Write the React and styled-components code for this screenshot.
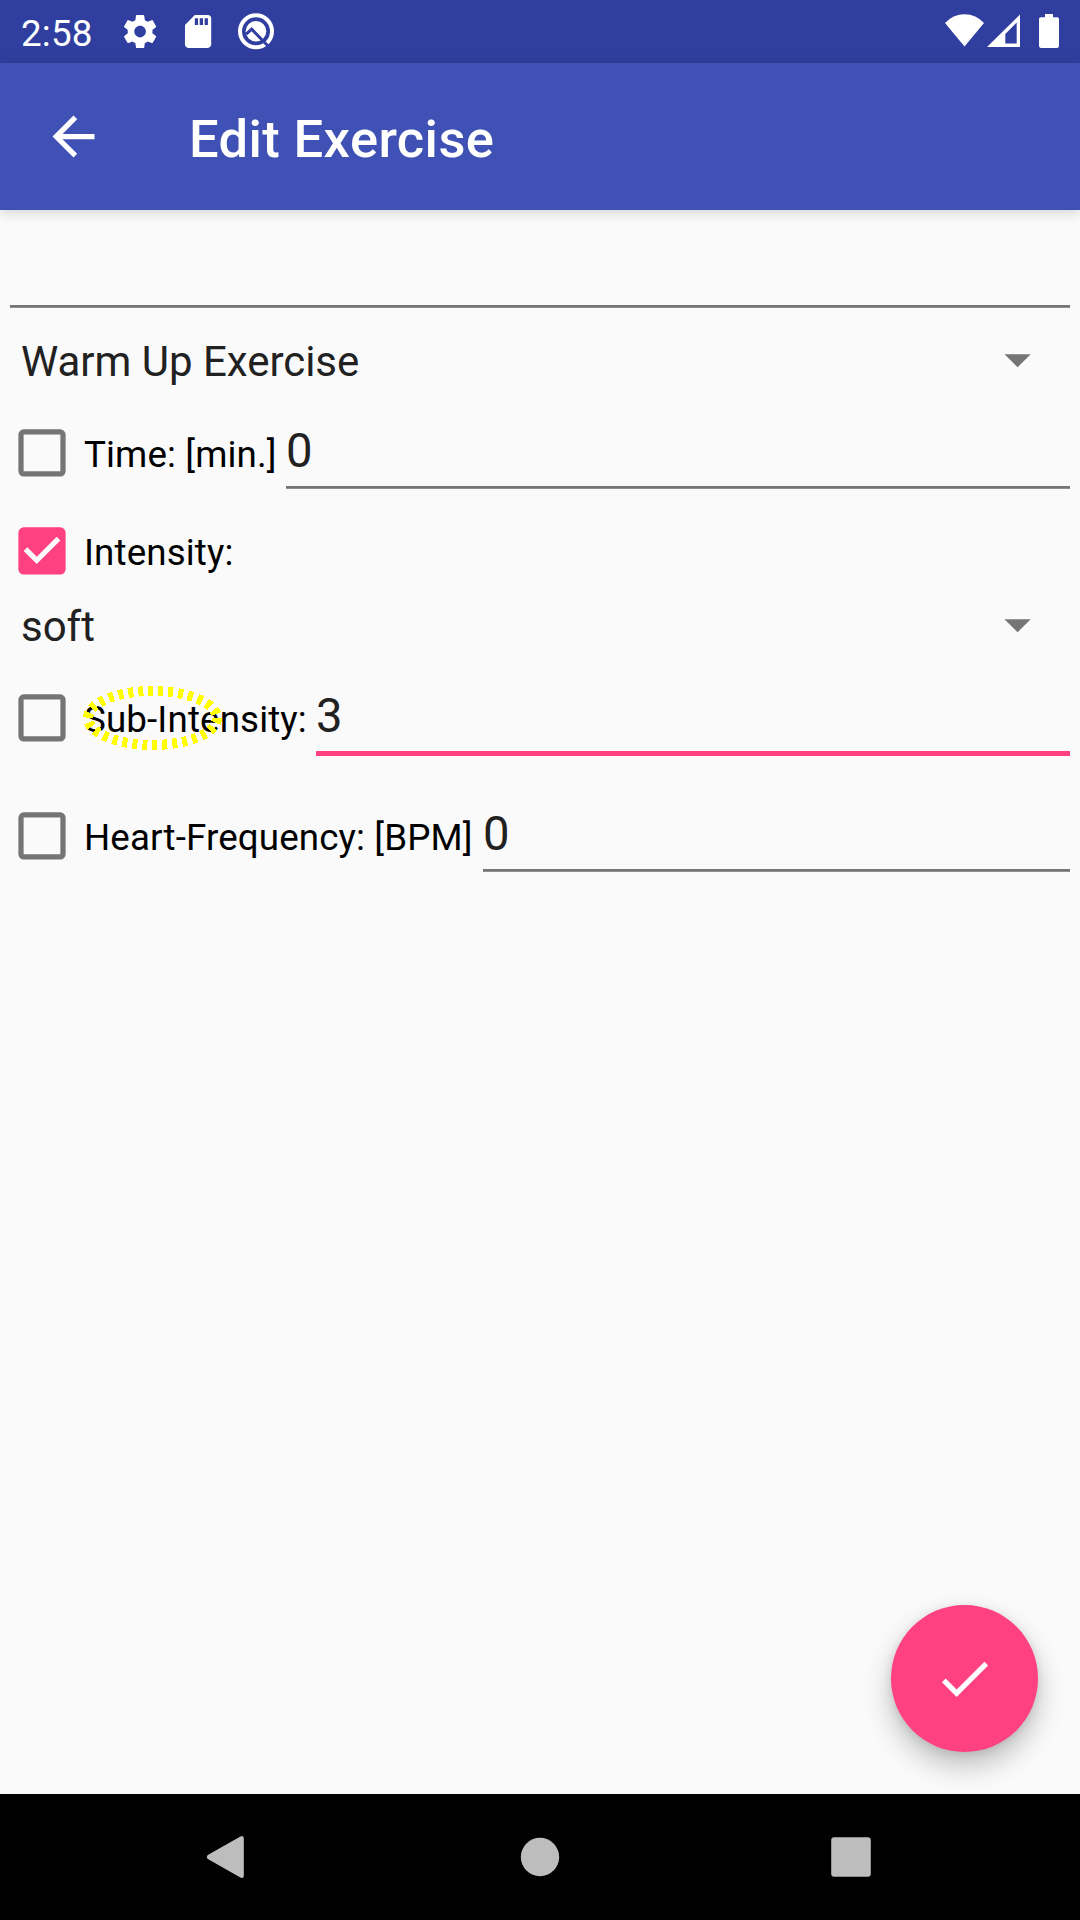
import React from "react";
import styled, { createGlobalStyle } from "styled-components";

const GlobalStyle = createGlobalStyle`
  * { box-sizing: border-box; }
  body { margin: 0; background: #fafafa; }
`;

const Screen = styled.div`
  width: 1080px;
  height: 1920px;
  display: flex;
  flex-direction: column;
  overflow: hidden;
  background: #fafafa;
  font-family: Roboto, "Noto Sans", sans-serif;
`;

const StatusBar = styled.header`
  height: 63px;
  flex: none;
  display: flex;
  align-items: flex-start;
  justify-content: space-between;
  background: #303f9f;
  color: #fff;
`;

const StatusGroup = styled.div`
  display: flex;
  height: 63px;
`;

const Clock = styled.span`
  width: 102px;
  padding-left: 21px;
  font-size: 36.75px;
  line-height: 67px;
  letter-spacing: 0.2px;
`;

const AppBar = styled.div`
  height: 147px;
  flex: none;
  display: flex;
  align-items: center;
  padding-left: 42px;
  background: #3f51b5;
  color: #fff;
  box-shadow: 0 2px 12px rgba(0, 0, 0, 0.17);
  z-index: 1;
`;

const IconButton = styled.button`
  display: flex;
  padding: 0;
  border: 0;
  background: none;
  color: inherit;
`;

const Title = styled.h1`
  margin: 5px 0 0 84px;
  font-size: 52.5px;
  line-height: 62px;
  font-weight: 500;
  letter-spacing: 0.38px;
  white-space: nowrap;
`;

const Form = styled.main`
  flex: 1;
  display: flex;
  flex-direction: column;
`;

const TextInput = styled.input`
  flex: 1;
  min-width: 0;
  height: ${(p) => p.$height || (p.$focused ? 89 : 87)}px;
  margin: 0 10px 0 0;
  padding: ${(p) => (p.$height ? 0 : p.$focused ? 8 : 10)}px 0 0;
  border: 0;
  border-radius: 0;
  outline: 0;
  background: linear-gradient(
      ${(p) => (p.$focused ? "#ff4081, #ff4081" : "#757575 2px, #8f8f8f 2px")}
    )
    left bottom / 100% ${(p) => (p.$focused ? 5 : 3)}px no-repeat;
  color: #212121;
  font: 47.25px/56px Roboto, "Noto Sans", sans-serif;
`;

const NameField = styled.div`
  height: 108px;
  display: flex;
  padding-left: 10px;
`;

const Spinner = styled.div`
  height: 84px;
  flex: none;
  display: flex;
  align-items: center;
  justify-content: space-between;
  padding: 3px 49px 0 21px;
  color: #212121;
  font-size: 42px;
  line-height: 50px;
  letter-spacing: -0.03px;
`;

const CaretSvg = styled.svg`
  width: 27px;
  height: 15px;
  margin-bottom: 2px;
`;

const Row = styled.div`
  height: ${(p) => p.$height || 102}px;
  margin-bottom: ${(p) => p.$gap || 0}px;
  flex: none;
  display: flex;
  align-items: flex-start;
`;

const CheckLabel = styled.label`
  height: 100%;
  width: ${(p) => p.$width}px;
  flex: none;
  display: flex;
  align-items: center;
  color: #000;
  font-size: 36.75px;
  line-height: 43px;
  letter-spacing: 0.12px;
  white-space: nowrap;
`;

const LabelText = styled.span`
  position: relative;
  padding-top: 3px;
`;

const BoxSvg = styled.svg`
  width: 63px;
  height: 63px;
  margin: 0 11px 1px 10px;
  flex: none;
`;

const Highlight = styled.svg`
  position: absolute;
  left: -2px;
  top: -11px;
  width: 142px;
  height: 68px;
`;

const FabArea = styled.div`
  margin: auto 42px 42px auto;
`;

const Fab = styled.button`
  width: 147px;
  height: 147px;
  display: flex;
  align-items: center;
  justify-content: center;
  padding: 0;
  border: 0;
  border-radius: 50%;
  background: #ff4081;
  box-shadow: 0 14px 28px rgba(0, 0, 0, 0.24), 0 2px 10px rgba(0, 0, 0, 0.1);
`;

const NavBar = styled.nav`
  height: 126px;
  flex: none;
  display: grid;
  grid-template-columns: 385px 310px 385px;
  align-items: center;
  background: #000;
  z-index: 1;
`;

const NavButton = styled(IconButton)`
  padding-left: ${(p) => p.$inset}px;
`;

function CheckBox({ checked }) {
  return (
    <BoxSvg viewBox="-0.19 -0.19 24 24">
      {checked ? (
        <path
          fill="#ff4081"
          d="M19 3H5a2 2 0 0 0-2 2v14a2 2 0 0 0 2 2h14a2 2 0 0 0 2-2V5a2 2 0 0 0-2-2zm-9 14l-5-5 1.41-1.41L10 14.17l7.59-7.59L19 8l-9 9z"
        />
      ) : (
        <path
          fill="#757575"
          d="M19 5v14H5V5h14m0-2H5a2 2 0 0 0-2 2v14a2 2 0 0 0 2 2h14a2 2 0 0 0 2-2V5a2 2 0 0 0-2-2z"
        />
      )}
    </BoxSvg>
  );
}

function Caret() {
  return (
    <CaretSvg viewBox="0 0 27 15">
      <path fill="#757575" d="M.5 1.2h26.2L13.6 14.3z" />
    </CaretSvg>
  );
}

function StatusLeftIcons() {
  return (
    <svg width="190" height="63" viewBox="102 0 190 63" fill="#fff">
      <g transform="translate(120.3 11.8) scale(1.65)">
        <path d="M19.43 12.98c.04-.32.07-.64.07-.98s-.03-.66-.07-.98l2.11-1.65c.19-.15.24-.42.12-.64l-2-3.46c-.12-.22-.39-.3-.61-.22l-2.49 1c-.52-.4-1.08-.73-1.69-.98l-.38-2.65A.488.488 0 0 0 14 2h-4c-.25 0-.46.18-.49.42l-.38 2.65c-.61.25-1.17.59-1.69.98l-2.49-1c-.23-.09-.49 0-.61.22l-2 3.46c-.13.22-.07.49.12.64l2.11 1.65c-.04.32-.07.65-.07.98s.03.66.07.98l-2.11 1.65c-.19.15-.24.42-.12.64l2 3.46c.12.22.39.3.61.22l2.49-1c.52.4 1.08.73 1.69.98l.38 2.65c.03.24.24.42.49.42h4c.25 0 .46-.18.49-.42l.38-2.65c.61-.25 1.17-.59 1.69-.98l2.49 1c.23.09.49 0 .61-.22l2-3.46c.12-.22.07-.49-.12-.64l-2.11-1.65zM12 15.5c-1.93 0-3.5-1.57-3.5-3.5s1.57-3.5 3.5-3.5 3.5 1.57 3.5 3.5-1.57 3.5-3.5 3.5z" />
      </g>
      <g transform="translate(178.4 11.8) scale(1.64)">
        <path d="M18 2h-8L4.02 8 4 20c0 1.1.9 2 2 2h12c1.1 0 2-.9 2-2V4c0-1.1-.9-2-2-2zm-6 6h-2V4h2v4zm3 0h-2V4h2v4zm3 0h-2V4h2v4z" />
      </g>
      <circle cx="256" cy="31.3" r="16" fill="none" stroke="#fff" strokeWidth="4" />
      <circle cx="256" cy="31.3" r="10.3" />
      <path d="M246.2 34.2L251.7 29.2L269.5 47.5" fill="none" stroke="#303f9f" strokeWidth="3" />
    </svg>
  );
}

function StatusRightIcons() {
  return (
    <svg width="140" height="63" viewBox="940 0 140 63" fill="#fff">
      <path d="M964.5 46.5L945 23Q953 14.2 964.5 14.2T984 23z" />
      <path
        fillRule="evenodd"
        d="M987 47L1020 14.5V47zM1005.3 43.5H1016.7V22.5L1005.3 34z"
      />
      <path d="M1045 14h8v3.3h4.2a1.8 1.8 0 0 1 1.8 1.8v27a1.8 1.8 0 0 1-1.8 1.8h-16.4a1.8 1.8 0 0 1-1.8-1.8v-27a1.8 1.8 0 0 1 1.8-1.8h4.2z" />
    </svg>
  );
}

export default function App() {
  return (
    <Screen>
      <GlobalStyle />
      <StatusBar>
        <StatusGroup>
          <Clock>2:58</Clock>
          <StatusLeftIcons />
        </StatusGroup>
        <StatusRightIcons />
      </StatusBar>
      <AppBar>
        <IconButton aria-label="Back">
          <svg width="63" height="63" viewBox="0 0 24 24" fill="#fff">
            <path d="M20 11H7.83l5.59-5.59L12 4l-8 8 8 8 1.41-1.41L7.83 13H20v-2z" />
          </svg>
        </IconButton>
        <Title>Edit Exercise</Title>
      </AppBar>
      <Form>
        <NameField>
          <TextInput $height={98} aria-label="Name" />
        </NameField>
        <Spinner>
          Warm Up Exercise
          <Caret />
        </Spinner>
        <Row $gap={15}>
          <CheckLabel $width={286}>
            <CheckBox />
            <LabelText>Time: [min.]</LabelText>
          </CheckLabel>
          <TextInput defaultValue="0" aria-label="Time" />
        </Row>
        <Row $height={64}>
          <CheckLabel>
            <CheckBox checked />
            <LabelText>Intensity:</LabelText>
          </CheckLabel>
        </Row>
        <Spinner>
          soft
          <Caret />
        </Spinner>
        <Row $gap={16}>
          <CheckLabel $width={316}>
            <CheckBox />
            <LabelText>
              Sub-Intensity:
              <Highlight viewBox="82 684 142 68" shapeRendering="crispEdges">
                <ellipse
                  cx="152.5"
                  cy="718"
                  rx="64.5"
                  ry="27"
                  fill="none"
                  stroke="#ff0"
                  strokeWidth="10"
                  strokeDasharray="5 5"
                />
              </Highlight>
            </LabelText>
          </CheckLabel>
          <TextInput $focused defaultValue="3" aria-label="Sub-Intensity" />
        </Row>
        <Row>
          <CheckLabel $width={483}>
            <CheckBox />
            <LabelText>Heart-Frequency: [BPM]</LabelText>
          </CheckLabel>
          <TextInput defaultValue="0" aria-label="Heart-Frequency" />
        </Row>
        <FabArea>
          <Fab aria-label="Save">
            <svg width="63" height="63" viewBox="0 0 24 24" fill="#fff">
              <path d="M9 16.17L4.83 12l-1.42 1.41L9 19 21 7l-1.41-1.41z" />
            </svg>
          </Fab>
        </FabArea>
      </Form>
      <NavBar>
        <NavButton $inset={206} aria-label="Back">
          <svg width="38" height="42" viewBox="0 0 38 42" fill="#bdbdbd">
            <path d="M1.8 19L34.4.5Q37.8 -1 37.8 2.6V39.4Q37.8 43 34.4 41.5L1.8 23Q-.2 21 1.8 19z" />
          </svg>
        </NavButton>
        <NavButton $inset={135} aria-label="Home">
          <svg width="40" height="40" viewBox="0 0 40 40" fill="#bdbdbd">
            <circle cx="20" cy="20" r="19.2" />
          </svg>
        </NavButton>
        <NavButton $inset={136} aria-label="Recents">
          <svg width="40" height="40" viewBox="0 0 40 40" fill="#bdbdbd">
            <rect x=".2" y=".2" width="39.6" height="39.6" rx="3" />
          </svg>
        </NavButton>
      </NavBar>
    </Screen>
  );
}
